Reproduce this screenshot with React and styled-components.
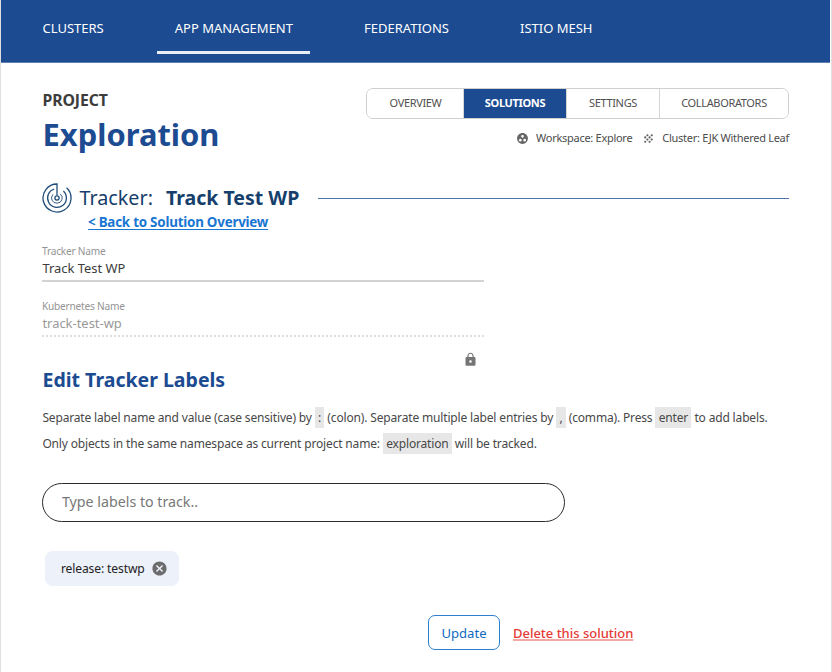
import React from "react";
import styled, { createGlobalStyle } from "styled-components";
import { MdCancel, MdGrain, MdGroupWork, MdLock } from "react-icons/md";

const GlobalStyle = createGlobalStyle`
  *, *::before, *::after { box-sizing: border-box; }
  body { margin: 0; background: #fff; font-family: "Noto Sans", sans-serif; color: #333; }
  svg { display: block; flex: none; }
`;

const Page = styled.div`
  height: 672px;
  overflow: hidden;
  border-left: 1px solid #dfdfdf;
  border-right: 1px solid #dfdfdf;
`;

const Header = styled.nav`
  display: flex;
  gap: 36px;
  height: 63px;
  margin-right: 1px;
  padding-left: 24px;
  background: #1c4b91;
  border-bottom: 1px solid #5d7fb2;
`;

const NavItem = styled.a`
  height: 54px;
  padding: 18px 17.5px 0;
  font-size: 13px;
  line-height: 20px;
  color: #fff;
  white-space: nowrap;
  border-bottom: 3px solid ${(p) => (p.$active ? "#e9eef6" : "transparent")};
`;

const Content = styled.main`
  padding: 25px 42px 0 41px;
`;

const TopRow = styled.div`
  display: flex;
  justify-content: space-between;
  height: 96px;
`;

const Eyebrow = styled.div`
  padding-left: 0.5px;
  font-size: 15.8px;
  font-weight: 700;
  line-height: 24px;
  letter-spacing: -0.12px;
  color: #3c3c3c;
`;

const ProjectName = styled.h1`
  margin: 0 0 0 0.5px;
  font-size: 30.9px;
  font-weight: 700;
  line-height: 44px;
  color: #1c4b91;
`;

const TopRight = styled.div`
  display: flex;
  flex-direction: column;
  align-items: flex-end;
`;

const Tabs = styled.div`
  display: flex;
  height: 31px;
  border: 1px solid #cfcfcf;
  border-radius: 7px;
  overflow: hidden;
`;

const Tab = styled.button`
  width: ${(p) => p.$width}px;
  padding: 0 0 2px;
  border: 0;
  border-left: 1px solid ${(p) => (p.$first ? "transparent" : "#d6d6d6")};
  background: ${(p) => (p.$active ? "#1c4b91" : "#fff")};
  color: ${(p) => (p.$active ? "#fff" : "#505050")};
  font: ${(p) => (p.$active ? 700 : 400)} 11px/26px "Noto Sans", sans-serif;
  letter-spacing: -0.34px;
`;

const MetaRow = styled.div`
  display: flex;
  gap: 10px;
  padding-top: 9px;
`;

const Meta = styled.div`
  display: flex;
  align-items: center;
  gap: 7px;
  font-size: 11px;
  line-height: 20px;
  letter-spacing: -0.28px;
  color: #4c4c4c;
  white-space: nowrap;
  svg { color: #666; }
`;

const TitleRow = styled.div`
  display: flex;
  align-items: center;
  height: 28px;
`;

const Title = styled.h2`
  margin: 0 0 0 7.5px;
  font-size: 19.75px;
  font-weight: 400;
  line-height: 28px;
  color: #163f6b;
  white-space: nowrap;
  b { margin-left: 13px; font-size: 19.5px; font-weight: 700; }
`;

const Rule = styled.div`
  flex: 1;
  height: 1px;
  margin-left: 19px;
  background: #4c74a4;
`;

const BackLink = styled.a`
  display: block;
  width: max-content;
  margin-left: 46px;
  font-size: 13.4px;
  font-weight: 700;
  line-height: 20px;
  letter-spacing: -0.23px;
  color: #1976d2;
  text-decoration: underline;
  text-decoration-thickness: 1px;
  text-underline-offset: 2px;
`;

const Field = styled.div`
  width: 442px;
  height: 37px;
  margin-top: ${(p) => p.$gap}px;
  border-bottom: ${(p) => (p.$disabled ? "2px dotted #dedede" : "2px solid #d3d3d3")};
  color: ${(p) => (p.$disabled ? "#999" : "#3c3c3c")};
`;

const FieldLabel = styled.div`
  font-size: 10.1px;
  line-height: 13px;
  letter-spacing: -0.2px;
  color: #949494;
`;

const FieldValue = styled.div`
  padding-left: 0.4px;
  font-size: 12.95px;
  line-height: 20px;
`;

const LockRow = styled.div`
  display: flex;
  justify-content: flex-end;
  width: 435.5px;
  height: 30px;
  padding-top: 15px;
  color: #757575;
`;

const SectionTitle = styled.h3`
  margin: 0 0 0 0.5px;
  font-size: 19.5px;
  font-weight: 700;
  line-height: 26px;
  color: #1c4b91;
`;

const Help = styled.p`
  margin: 12px 0 0 0.4px;
  font-size: 12px;
  line-height: 26px;
  letter-spacing: -0.16px;
  color: #484848;
  white-space: nowrap;
`;

const Code = styled.span`
  padding: 2px 3.3px 2px;
  background: #e7e7e7;
`;

const LabelInput = styled.input`
  display: block;
  width: 523px;
  height: 39px;
  margin-top: 26px;
  padding: 0 19px 2px;
  border: 1px solid #2b2b2b;
  border-radius: 20px;
  outline: none;
  font: 14.22px "Noto Sans", sans-serif;
  &::placeholder { color: #777; opacity: 1; }
`;

const Chip = styled.div`
  display: flex;
  align-items: center;
  gap: 6.5px;
  width: 133.5px;
  height: 35px;
  margin: 29px 0 0 3.4px;
  padding: 0 0 0 15.5px;
  border-radius: 8px;
  background: #ecf1fa;
  font-size: 12.1px;
  line-height: 18px;
  letter-spacing: -0.12px;
  color: #222;
  white-space: nowrap;
  svg { margin-bottom: 1px; color: #6c6c6e; }
`;

const Actions = styled.div`
  display: flex;
  align-items: center;
  gap: 13px;
  margin: 29px 0 0 386px;
`;

const UpdateButton = styled.button`
  width: 72px;
  height: 35px;
  padding: 0;
  border: 1px solid #2f7fce;
  border-radius: 7px;
  background: #fff;
  color: #0d6cc0;
  font: 13.08px "Noto Sans", sans-serif;
`;

const DeleteLink = styled.a`
  font-size: 12.97px;
  font-weight: 500;
  color: #e53935;
  text-decoration: underline;
  text-decoration-color: #f5a9a7;
  text-decoration-thickness: 2px;
  text-underline-offset: 1px;
  text-decoration-skip-ink: none;
`;

const TrackerIcon = () => (
  <svg width="30" height="30" viewBox="0 0 30 30" fill="none" stroke="#1f4c79" strokeWidth="1.3">
    <path d="M15 12.6V1A14 14 0 1 0 24.6 4.8" />
    <path d="M12.2 6A9.4 9.4 0 1 0 21.4 8.1" />
    <path d="M11 11.4A5.2 5.2 0 0 0 15 20.2A5.2 5.2 0 0 0 18.2 10.9" strokeWidth="0.9" />
    <circle cx="15" cy="15" r="2.1" />
  </svg>
);

const NAV = ["CLUSTERS", "APP MANAGEMENT", "FEDERATIONS", "ISTIO MESH"];
const TABS = [["OVERVIEW", 96], ["SOLUTIONS", 103], ["SETTINGS", 93], ["COLLABORATORS", 129]];

export default function App() {
  return (
    <Page>
      <GlobalStyle />
      <Header>
        {NAV.map((name) => (
          <NavItem key={name} $active={name === "APP MANAGEMENT"}>{name}</NavItem>
        ))}
      </Header>
      <Content>
        <TopRow>
          <div>
            <Eyebrow>PROJECT</Eyebrow>
            <ProjectName>Exploration</ProjectName>
          </div>
          <TopRight>
            <Tabs>
              {TABS.map(([name, width], i) => (
                <Tab key={name} $width={width} $first={i === 0} $active={name === "SOLUTIONS"}>{name}</Tab>
              ))}
            </Tabs>
            <MetaRow>
              <Meta><MdGroupWork size={13} />Workspace: Explore</Meta>
              <Meta><MdGrain size={13} />Cluster: EJK Withered Leaf</Meta>
            </MetaRow>
          </TopRight>
        </TopRow>
        <TitleRow>
          <TrackerIcon />
          <Title>Tracker:<b>Track Test WP</b></Title>
          <Rule />
        </TitleRow>
        <BackLink>&lt; Back to Solution Overview</BackLink>
        <Field $gap={13}>
          <FieldLabel>Tracker Name</FieldLabel>
          <FieldValue>Track Test WP</FieldValue>
        </Field>
        <Field $gap={18} $disabled>
          <FieldLabel>Kubernetes Name</FieldLabel>
          <FieldValue>track-test-wp</FieldValue>
        </Field>
        <LockRow><MdLock size={15} /></LockRow>
        <SectionTitle>Edit Tracker Labels</SectionTitle>
        <Help>
          Separate label name and value (case sensitive) by <Code>:</Code> (colon). Separate multiple label
          entries by <Code>,</Code> (comma). Press <Code>enter</Code> to add labels.
          <br />
          Only objects in the same namespace as current project name: <Code>exploration</Code> will be tracked.
        </Help>
        <LabelInput placeholder="Type labels to track.." />
        <Chip>release: testwp<MdCancel size={17} /></Chip>
        <Actions>
          <UpdateButton>Update</UpdateButton>
          <DeleteLink>Delete this solution</DeleteLink>
        </Actions>
      </Content>
    </Page>
  );
}
